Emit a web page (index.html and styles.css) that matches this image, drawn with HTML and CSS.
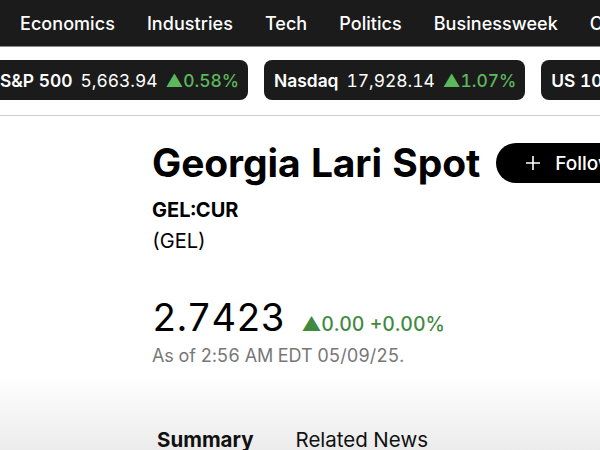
FILE: index.html
```html
<!DOCTYPE html>
<html lang="en">
<head>
  <meta charset="UTF-8">
  <title>Georgia Lari Spot</title>
  <link rel="stylesheet" href="styles.css">
</head>
<body>
  <nav class="topnav">
    <a href="#">Economics</a>
    <a href="#">Industries</a>
    <a href="#">Tech</a>
    <a href="#">Politics</a>
    <a href="#">Businessweek</a>
    <a href="#">Opinion</a>
  </nav>

  <div class="tickers">
    <div class="pill">
      <span class="pill-name">S&amp;P 500</span>
      <span class="pill-value">5,663.94</span>
      <span class="pill-change">&#9650;0.58%</span>
    </div>
    <div class="pill">
      <span class="pill-name">Nasdaq</span>
      <span class="pill-value">17,928.14</span>
      <span class="pill-change">&#9650;1.07%</span>
    </div>
    <div class="pill">
      <span class="pill-name">US 10 Yr</span>
      <span class="pill-value">4.38</span>
      <span class="pill-change">&#9650;0.02</span>
    </div>
  </div>

  <main class="quote">
    <div class="title-row">
      <h1>Georgia Lari Spot</h1>
      <button class="follow" type="button">
        <svg width="14" height="14" viewBox="0 0 14 14">
          <path d="M7 0v14M0 7h14" stroke="#fff" stroke-width="1.6" fill="none"/>
        </svg>
        Follow
      </button>
    </div>
    <div class="symbol">GEL:CUR</div>
    <div class="currency">(GEL)</div>

    <div class="price-row">
      <span class="price">2.7423</span>
      <span class="change">&#9650;0.00 +0.00%</span>
    </div>
    <div class="asof">As of 2:56 AM EDT 05/09/25.</div>
  </main>

  <div class="tabs">
    <a href="#" class="tab active">Summary</a>
    <a href="#" class="tab">Related News</a>
  </div>
</body>
</html>
```

FILE: styles.css
```css
body {
  margin: 0;
  font-family: Inter, "Liberation Sans", sans-serif;
  font-variant-numeric: tabular-nums;
  background-color: #ffffff;
  color: #000;
  overflow: hidden;
}

a {
  color: inherit;
  text-decoration: none;
}

.topnav {
  display: flex;
  gap: 32px;
  height: 46px;
  align-items: center;
  padding-left: 20px;
  background-color: #1b1b1b;
  border-bottom: 1px solid #8a8a8a;
  white-space: nowrap;
  overflow: hidden;
}

.topnav a {
  color: #fff;
  font-size: 18px;
  font-weight: 500;
  letter-spacing: 0.05px;
}

.tickers {
  display: flex;
  gap: 16px;
  padding: 13px 0 15px;
  margin-left: -10px;
  border-bottom: 1px solid #cfcfcf;
  white-space: nowrap;
  overflow: hidden;
}

.pill {
  display: flex;
  align-items: center;
  gap: 8px;
  flex-shrink: 0;
  height: 40px;
  padding: 0 9px 0 10px;
  border-radius: 8px;
  background-color: #1b1b1b;
  color: #fff;
  font-size: 17.4px;
}

.pill-name {
  font-weight: 600;
}

.pill-change {
  color: #5cb85c;
  font-weight: 500;
}

.quote {
  padding: 24px 0 0 152px;
}

.title-row {
  display: flex;
  align-items: center;
  gap: 16px;
  white-space: nowrap;
}

h1 {
  margin: 0;
  font-size: 39px;
  font-weight: 700;
  line-height: 46px;
  letter-spacing: -0.1px;
}

.follow {
  display: flex;
  align-items: center;
  gap: 15px;
  flex-shrink: 0;
  height: 40px;
  padding: 0 30px;
  border: none;
  border-radius: 20px;
  background-color: #000;
  color: #fff;
  font-family: inherit;
  font-size: 19px;
  font-weight: 500;
}

.symbol {
  margin-top: 11px;
  font-size: 20px;
  font-weight: 700;
  line-height: 26px;
}

.currency {
  margin-top: 5px;
  font-size: 20px;
  line-height: 26px;
}

.price-row {
  display: flex;
  align-items: baseline;
  gap: 16px;
  margin-top: 41px;
}

.price {
  font-size: 38px;
  line-height: 44px;
}

.change {
  color: #3f8a3f;
  font-size: 19.5px;
  font-weight: 500;
}

.asof {
  margin-top: 6px;
  color: #777;
  font-size: 18px;
  letter-spacing: -0.1px;
}

.tabs {
  display: flex;
  gap: 42px;
  height: 76px;
  margin-top: 10px;
  padding-left: 157px;
  align-items: flex-end;
  background: linear-gradient(#ffffff, #ebebeb);
}

.tab {
  font-size: 20.5px;
  line-height: 24px;
  color: #111;
}

.tab.active {
  font-weight: 700;
}
```
